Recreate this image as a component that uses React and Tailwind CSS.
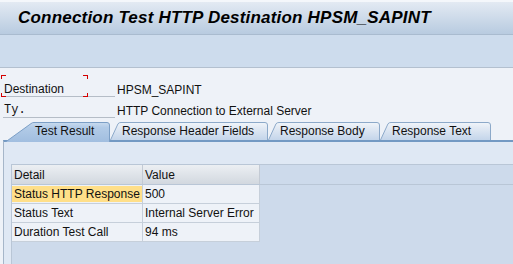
import React from "react";

const fSans = "font-['Liberation_Sans',Arial,sans-serif]";

function Tab({ label, width, active, pad, id }) {
  const w = width;
  const fillPath = active
    ? `M0.5,20 L26,1.6 Q27.2,0.5 29,0.5 L${w - 3},0.5 Q${w - 0.5},0.5 ${w - 0.5},3 L${w - 0.5},20 Z`
    : `M0.5,18 L8,1.8 Q9,0.5 11,0.5 L${w - 3},0.5 Q${w - 0.5},0.5 ${w - 0.5},3 L${w - 0.5},18 Z`;
  const strokePath = active
    ? `M0.5,20 L26,1.6 Q27.2,0.5 29,0.5 L${w - 3},0.5 Q${w - 0.5},0.5 ${w - 0.5},3 L${w - 0.5},20`
    : `M0.5,18 L8,1.8 Q9,0.5 11,0.5 L${w - 3},0.5 Q${w - 0.5},0.5 ${w - 0.5},3 L${w - 0.5},18`;
  return (
    <div className={`relative h-[20px] shrink-0 ${active ? "z-20" : "z-0"}`} style={{ width: w }}>
      <svg className="absolute left-0 top-0" width={w} height={20} viewBox={`0 0 ${w} 20`}>
        <defs>
          <linearGradient id={id} x1="0" y1="0" x2="0" y2="1">
            {active ? (
              <>
                <stop offset="0" stopColor="#c9dbef" />
                <stop offset="0.25" stopColor="#b2cbe7" />
                <stop offset="1" stopColor="#a1bee0" />
              </>
            ) : (
              <>
                <stop offset="0" stopColor="#f1f5fa" />
                <stop offset="0.3" stopColor="#e2eaf4" />
                <stop offset="1" stopColor="#c4d5ea" />
              </>
            )}
          </linearGradient>
        </defs>
        <path d={fillPath} fill={`url(#${id})`} />
        <path d={strokePath} fill="none" stroke={active ? "#7c9fc6" : "#8ca9c9"} strokeWidth="1" />
      </svg>
      <div className={`relative flex h-[18px] items-center text-[12px] text-[#111] ${fSans}`} style={{ paddingLeft: pad }}>
        {label}
      </div>
    </div>
  );
}

function Corner({ pos }) {
  const cls = {
    tl: "left-0 top-0 border-l border-t",
    tr: "right-0 top-0 border-r border-t",
    bl: "left-0 bottom-0 border-l border-b",
    br: "right-0 bottom-0 border-r border-b",
  }[pos];
  return <span className={`absolute h-[4px] w-[5px] border-[#d40000] ${cls}`} />;
}

const rows = [
  { k: "Status HTTP Response", v: "500", hi: true },
  { k: "Status Text", v: "Internal Server Error" },
  { k: "Duration Test Call", v: "94 ms" },
];

export default function App() {
  return (
    <div className={`flex h-[264px] w-[513px] flex-col overflow-hidden bg-[#eef2f8] ${fSans}`}>
      {/* title */}
      <div className="flex h-[35px] shrink-0 items-center border-t-2 border-b border-t-[#f4f7fb] border-b-[#a9bbcf] bg-gradient-to-b from-[#e3eaf3] to-[#b8cbe0] pl-[18px]">
        <span className="text-[17px] font-bold italic tracking-[0.2px] text-black">
          Connection Test HTTP Destination HPSM_SAPINT
        </span>
      </div>
      {/* toolbar */}
      <div className="h-[33px] shrink-0 border-b border-[#b3c0cf] bg-[#cddced]" />

      {/* fields */}
      <div className="relative mt-[8px] flex h-[21px] items-stretch">
        <div className="absolute left-[1px] top-[-1px] h-[22px] w-[87px]">
          <Corner pos="tl" />
          <Corner pos="tr" />
          <Corner pos="bl" />
          <Corner pos="br" />
        </div>
        <div className="ml-[3px] flex w-[112px] items-center border-b border-[#b5bdc7] pl-[1px] pt-[6px] text-[12px] text-[#111]">
          Destination
        </div>
        <div className="ml-[2px] flex items-center pt-[6px] text-[12px] text-[#111]">HPSM_SAPINT</div>
      </div>
      <div className="flex h-[21px] items-stretch">
        <div className="ml-[3px] flex w-[112px] items-center border-b border-[#b5bdc7] pl-[1px] pt-[6px] font-['Liberation_Mono',monospace] text-[12px] text-[#111]">
          Ty.
        </div>
        <div className="ml-[2px] flex items-center pt-[6px] text-[12px] text-[#111]">HTTP Connection to External Server</div>
      </div>

      {/* tabs */}
      <div className="relative z-10 mb-[-2px] mt-[4px] flex pl-[5px]">
        <Tab id="t1" label="Test Result" width={105} active pad={30} />
        <Tab id="t2" label="Response Header Fields" width={158} pad={12} />
        <Tab id="t3" label="Response Body" width={112} pad={12} />
        <Tab id="t4" label="Response Text" width={111} pad={12} />
      </div>

      {/* panel */}
      <div className="ml-[3px] flex flex-1 flex-col border-l border-t-2 border-l-[#a6b6c9] border-t-[#7399c3] bg-[#dfe8f4] pt-[22px]">
        <div className="ml-[7px] flex-1 border-l border-t border-[#b9c6d6] bg-[#cddaeb]">
          <div className="flex h-[20px] border-b border-[#b9c6d6]">
            <div className="flex w-[131px] items-center border-r border-[#c3cad4] bg-gradient-to-b from-[#eceff3] to-[#d2d8df] pl-[2px] text-[12px] text-[#111]">
              Detail
            </div>
            <div className="flex w-[117px] items-center border-r border-[#c3cad4] bg-gradient-to-b from-[#eceff3] to-[#d2d8df] pl-[2px] text-[12px] text-[#111]">
              Value
            </div>
          </div>
          {rows.map((r) => (
            <div key={r.k} className="flex h-[19px]">
              <div className="flex w-[131px] border-b border-r border-[#c6cfda] bg-[#eef2f8]">
                <div
                  className={`flex flex-1 items-center pl-[2px] text-[12px] text-[#111] ${
                    r.hi ? "my-[1px] bg-[#ffdf89]" : ""
                  }`}
                >
                  {r.k}
                </div>
              </div>
              <div className="flex w-[117px] items-center border-b border-r border-[#c6cfda] bg-[#eef2f8] pl-[2px] text-[12px] text-[#111]">
                {r.v}
              </div>
            </div>
          ))}
        </div>
      </div>
    </div>
  );
}
